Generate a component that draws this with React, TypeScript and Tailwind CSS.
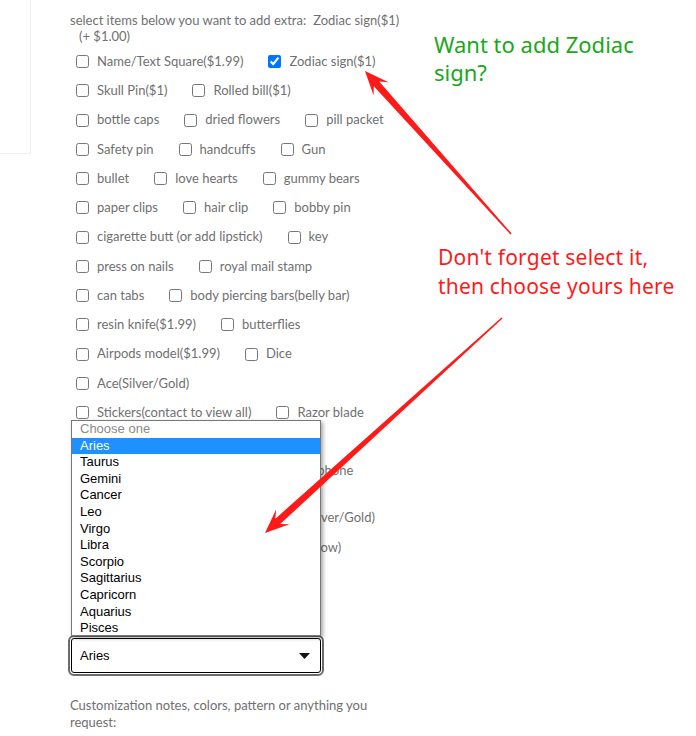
const rows: { label: string; checked?: boolean }[][] = [
  [{ label: "Name/Text Square($1.99)" }, { label: "Zodiac sign($1)", checked: true }],
  [{ label: "Skull Pin($1)" }, { label: "Rolled bill($1)" }],
  [{ label: "bottle caps" }, { label: "dried flowers" }, { label: "pill packet" }],
  [{ label: "Safety pin" }, { label: "handcuffs" }, { label: "Gun" }],
  [{ label: "bullet" }, { label: "love hearts" }, { label: "gummy bears" }],
  [{ label: "paper clips" }, { label: "hair clip" }, { label: "bobby pin" }],
  [{ label: "cigarette butt (or add lipstick)" }, { label: "key" }],
  [{ label: "press on nails" }, { label: "royal mail stamp" }],
  [{ label: "can tabs" }, { label: "body piercing bars(belly bar)" }],
  [{ label: "resin knife($1.99)" }, { label: "butterflies" }],
  [{ label: "Airpods model($1.99)" }, { label: "Dice" }],
  [{ label: "Ace(Silver/Gold)" }],
  [{ label: "Stickers(contact to view all)" }, { label: "Razor blade" }],
];

// rows that sit behind the open menu, only their ends show
const coveredA = [{ label: "Chains (Silver/Gold/Rose)" }, { label: "Mini phone" }];
const coveredB = [
  [{ label: "Pearl necklaces(contact)" }, { label: "Ring(Silver/Gold)" }],
  [{ label: "Feather" }, { label: "Sunflower(Random/yellow)" }],
];

const signs = [
  "Aries",
  "Taurus",
  "Gemini",
  "Cancer",
  "Leo",
  "Virgo",
  "Libra",
  "Scorpio",
  "Sagittarius",
  "Capricorn",
  "Aquarius",
  "Pisces",
];

function arrowPoints(x1: number, y1: number, x2: number, y2: number) {
  const dx = x2 - x1;
  const dy = y2 - y1;
  const len = Math.hypot(dx, dy);
  const ux = dx / len;
  const uy = dy / len;
  const px = -uy;
  const py = ux;
  const at = (d: number, w: number) =>
    `${(x1 + ux * d + px * w).toFixed(1)},${(y1 + uy * d + py * w).toFixed(1)}`;
  const head = 24;
  const neck = len - head * 0.72;
  const barb = len - head;
  return [
    at(0, 0.8),
    at(neck, 3.6),
    at(barb, 10),
    at(len, 0),
    at(barb, -10),
    at(neck, -3.6),
    at(0, -0.8),
  ].join(" ");
}

function Item({ label, checked }: { label: string; checked?: boolean }) {
  return (
    <label className="flex items-center whitespace-nowrap">
      <input
        type="checkbox"
        defaultChecked={checked}
        className="m-0 w-[13px] h-[13px]"
      />
      <span className="ml-2">{label}</span>
    </label>
  );
}

function Row({ items }: { items: { label: string; checked?: boolean }[] }) {
  return (
    <div className="h-[29.25px] flex items-center gap-[25px] pl-[6px]">
      {items.map((it) => (
        <Item key={it.label} {...it} />
      ))}
    </div>
  );
}

export default function App() {
  return (
    <div className="relative w-[696px] h-[736px] overflow-hidden bg-white">
      <div className="flex items-start">
        <div className="w-[31px] h-[154px] border-r border-b border-[#eeeeee]" />

        <div
          className="ml-[39px] pt-[12px] w-[340px] text-[13px] text-[#707070]"
          style={{ fontFamily: "Lato, 'Liberation Sans', sans-serif" }}
        >
          <div className="leading-4">
            select items below you want to add extra:
            <span className="ml-[7px]">Zodiac sign($1)</span>
            <div className="pl-[9px]">(+ $1.00)</div>
          </div>

          <div className="mt-[3px]">
            {rows.map((row, i) => (
              <Row key={i} items={row} />
            ))}
          </div>
          <div className="mt-[29.25px]">
            <Row items={coveredA} />
          </div>
          <div className="mt-[17.8px]">
            {coveredB.map((row, i) => (
              <Row key={i} items={row} />
            ))}
          </div>

          <div className="mt-[76px] ml-px w-[250px] h-[35px] rounded-[3px] border border-black outline-2 outline-[#6b6b6b] outline-offset-[1px] flex items-center justify-between pl-[8px] pr-[10px] text-[13px] text-black font-['Liberation_Sans',Arial,sans-serif]">
            <span>Aries</span>
            <svg width="11" height="6" viewBox="0 0 11 6">
              <path d="M0 0h11L5.5 6z" fill="#111" />
            </svg>
          </div>

          <p className="mt-[23.5px] w-[320px] leading-[17px]">
            Customization notes, colors, pattern or anything you request:
          </p>
        </div>
      </div>

      {/* open select menu */}
      <div className="absolute left-[71px] top-[420px] w-[250px] h-[216px] bg-white border border-[#777] shadow-[2px_2px_4px_rgba(0,0,0,0.35)] text-[13px] leading-[16.6px] text-black font-['Liberation_Sans',Arial,sans-serif]">
        <div className="pl-[8px] text-[#8a8a8a]">Choose one</div>
        {signs.map((s, i) => (
          <div key={s} className={i === 0 ? "pl-[8px] bg-[#1e90ff] text-white" : "pl-[8px]"}>
            {s}
          </div>
        ))}
      </div>

      {/* annotations */}
      <div className="absolute left-[434px] top-[30px] w-[240px] text-[22px] leading-[28px] text-[#1aa81a] font-['Noto_Sans',sans-serif]">
        Want to add Zodiac sign?
      </div>
      <div className="absolute left-[438px] top-[243px] whitespace-nowrap text-[21px] leading-[29px] tracking-[0.2px] text-[#ff1a1a] font-['Noto_Sans',sans-serif]">
        Don't forget select it,
        <br />
        then choose yours here
      </div>

      <svg className="absolute left-0 top-0 pointer-events-none" width="696" height="736">
        <polygon points={arrowPoints(511, 234, 365, 71)} fill="#ff1a1a" />
        <polygon points={arrowPoints(502, 318, 265, 533)} fill="#ff1a1a" />
      </svg>
    </div>
  );
}
